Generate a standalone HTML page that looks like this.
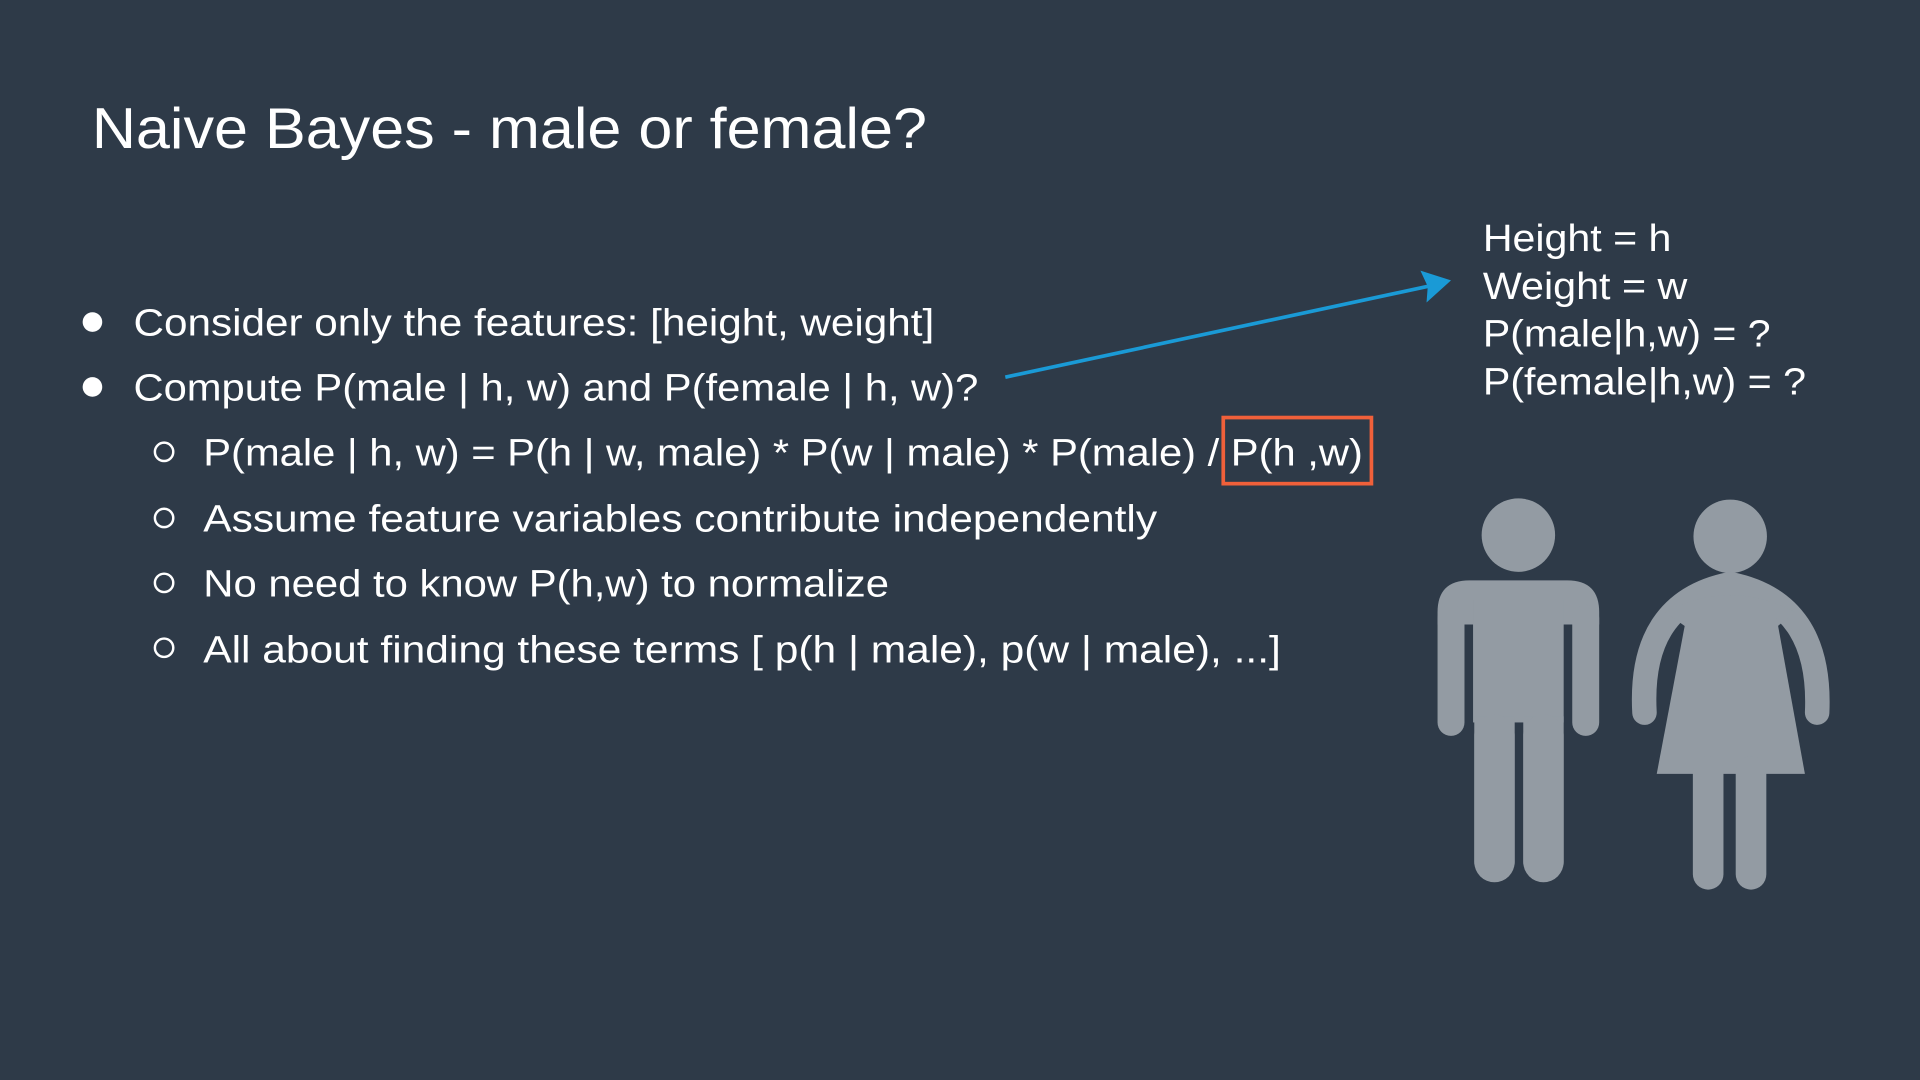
<!DOCTYPE html>
<html><head><meta charset="utf-8"><style>
html,body{margin:0;padding:0;background:#2e3a48;}
svg{display:block;}
text{font-family:"Liberation Sans",sans-serif;fill:#ffffff;}
</style></head><body>
<svg width="1920" height="1080" viewBox="0 0 1568 882" xmlns="http://www.w3.org/2000/svg">
<rect width="1568" height="882" fill="#2e3a48"/>
<text x="75" y="121" font-size="47" textLength="682" lengthAdjust="spacingAndGlyphs">Naive Bayes - male or female?</text>

<circle cx="75.5" cy="263" r="8" fill="#fff"/>
<circle cx="75.5" cy="316" r="8" fill="#fff"/>
<g font-size="31">
<text x="109" y="274" textLength="654" lengthAdjust="spacingAndGlyphs">Consider only the features: [height, weight]</text>
<text x="109" y="327" textLength="690" lengthAdjust="spacingAndGlyphs">Compute P(male | h, w) and P(female | h, w)?</text>
<text x="166" y="380" textLength="947" lengthAdjust="spacingAndGlyphs">P(male | h, w) = P(h | w, male) * P(w | male) * P(male) / P(h ,w)</text>
<text x="166" y="434" textLength="779" lengthAdjust="spacingAndGlyphs">Assume feature variables contribute independently</text>
<text x="166" y="487" textLength="560" lengthAdjust="spacingAndGlyphs">No need to know P(h,w) to normalize</text>
<text x="166" y="541" textLength="880" lengthAdjust="spacingAndGlyphs">All about finding these terms [ p(h | male), p(w | male), ...]</text>
</g>
<g fill="none" stroke="#fff" stroke-width="2">
<circle cx="134" cy="369" r="7.5"/>
<circle cx="134" cy="423" r="7.5"/>
<circle cx="134" cy="476" r="7.5"/>
<circle cx="134" cy="529" r="7.5"/>
</g>
<rect x="999" y="341" width="121" height="54" fill="none" stroke="#f0603a" stroke-width="3"/>

<line x1="821" y1="308" x2="1170" y2="233" stroke="#1a9ad6" stroke-width="3"/>
<polygon points="1185,229 1160,221 1166,234 1165,247" fill="#1a9ad6"/>

<g font-size="31">
<text x="1211" y="205" textLength="154" lengthAdjust="spacingAndGlyphs">Height = h</text>
<text x="1211" y="244" textLength="167" lengthAdjust="spacingAndGlyphs">Weight = w</text>
<text x="1211" y="283" textLength="235" lengthAdjust="spacingAndGlyphs">P(male|h,w) = ?</text>
<text x="1211" y="322" textLength="264" lengthAdjust="spacingAndGlyphs">P(female|h,w) = ?</text>
</g>

<g fill="#939ba3" stroke="#939ba3" stroke-linecap="round" stroke-linejoin="round">
<circle cx="1240" cy="437" r="30" stroke="none"/>
<path d="M1174,510 L1174,500 Q1174,474 1200,474 L1280,474 Q1306,474 1306,500 L1306,510 Z" stroke="none"/>
<path d="M1185,590 L1185,505" stroke-width="22" fill="none"/>
<path d="M1295,590 L1295,505" stroke-width="22" fill="none"/>
<rect x="1203" y="490" width="74" height="100" stroke="none"/>
<rect x="1204" y="585" width="33" height="121" stroke="none"/>
<rect x="1244" y="585" width="33" height="121" stroke="none"/>
<path d="M1220.5,600 L1220.5,704" stroke-width="33" fill="none"/>
<path d="M1260.5,600 L1260.5,704" stroke-width="33" fill="none"/>

<circle cx="1413" cy="438" r="30" stroke="none"/>
<path d="M1343,582 Q1338,492 1413,477 Q1488,492 1484,582" stroke-width="20" fill="none"/>
<path d="M1360,500 Q1413,472 1466,500 L1451,512 L1377,512 Z" stroke="none"/>
<path d="M1377,505 L1451,505 L1474,632 L1353,632 Z" stroke="none"/>
<path d="M1395,630 L1395,714" stroke-width="25" fill="none"/>
<path d="M1430,630 L1430,714" stroke-width="25" fill="none"/>
</g>
</svg>
</body></html>
